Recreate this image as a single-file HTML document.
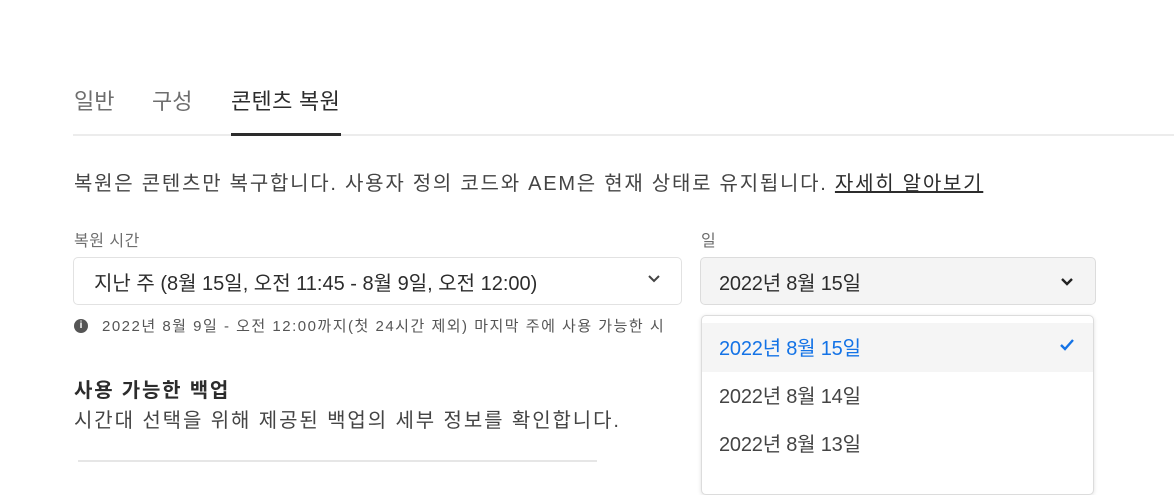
<!DOCTYPE html>
<html><head><meta charset="utf-8"><style>
*{margin:0;padding:0;box-sizing:border-box}
body{width:1174px;height:462px;overflow:hidden;background:#fff;font-family:"Liberation Sans","Noto Sans CJK KR",sans-serif;color:#2c2c2c;position:relative}
.a{position:absolute;white-space:nowrap}
</style></head><body>
<div class="a" style="left:74px;top:84px;font-size:22px;color:#6e6e6e">일반</div>
<div class="a" style="left:152px;top:84px;font-size:22px;color:#6e6e6e">구성</div>
<div class="a" style="left:231px;top:84px;font-size:22px;color:#2c2c2c;letter-spacing:0.3px">콘텐츠 복원</div>
<div class="a" style="left:73px;top:134px;width:1101px;height:2px;background:#ececec"></div>
<div class="a" style="left:231px;top:133px;width:110px;height:3px;background:#2c2c2c"></div>
<div class="a" style="left:74px;top:167px;font-size:20px;color:#444;letter-spacing:1.75px">복원은 콘텐츠만 복구합니다. 사용자 정의 코드와 AEM은 현재 상태로 유지됩니다. <span style="text-decoration:underline;color:#2c2c2c">자세히 알아보기</span></div>
<div class="a" style="left:74px;top:227px;font-size:16px;color:#6e6e6e;letter-spacing:0.5px">복원 시간</div>
<div class="a" style="left:73px;top:257px;width:609px;height:48px;border:1px solid #e2e2e2;border-radius:5px;background:#fff"></div>
<div class="a" style="left:94px;top:267px;font-size:20px;color:#2c2c2c;letter-spacing:0px">지난 주 (8월 15일, 오전 11:45 - 8월 9일, 오전 12:00)</div>
<svg class="a" style="left:647px;top:274px" width="14" height="10"><path d="M2 2 L7 7 L12 2" stroke="#444" stroke-width="2" fill="none"/></svg>
<div class="a" style="left:74px;top:319px;width:14px;height:14px;border-radius:50%;background:#555;color:#fff;font-size:10px;font-weight:bold;text-align:center;line-height:14px">i</div>
<div class="a" style="left:102px;top:315px;font-size:15px;color:#555;letter-spacing:1.5px">2022년 8월 9일 - 오전 12:00까지(첫 24시간 제외) 마지막 주에 사용 가능한 시</div>
<div class="a" style="left:74px;top:374px;font-size:20px;font-weight:bold;color:#2c2c2c;letter-spacing:1.8px">사용 가능한 백업</div>
<div class="a" style="left:74px;top:404px;font-size:20px;color:#444;letter-spacing:1.9px">시간대 선택을 위해 제공된 백업의 세부 정보를 확인합니다.</div>
<div class="a" style="left:78px;top:460px;width:519px;height:2px;background:#e6e6e6"></div>
<div class="a" style="left:701px;top:227px;font-size:16px;color:#6e6e6e">일</div>
<div class="a" style="left:700px;top:257px;width:396px;height:48px;border:1px solid #dcdcdc;border-radius:5px;background:#f4f4f4"></div>
<div class="a" style="left:719px;top:267px;font-size:20px;color:#2c2c2c;letter-spacing:-0.2px">2022년 8월 15일</div>
<svg class="a" style="left:1060px;top:277px" width="14" height="10"><path d="M2 2 L7 7 L12 2" stroke="#222" stroke-width="2.4" fill="none"/></svg>
<div class="a" style="left:701px;top:315px;width:393px;height:180px;border:1px solid #dcdcdc;border-radius:5px;background:#fff;box-shadow:0 1px 4px rgba(0,0,0,.12);overflow:hidden">
<div style="position:absolute;left:0;top:7px;width:100%;height:49px;background:#f5f5f5"></div>
</div>
<div class="a" style="left:719px;top:332px;font-size:20px;color:#1473e6;letter-spacing:-0.2px">2022년 8월 15일</div>
<svg class="a" style="left:1059px;top:338px" width="16" height="14"><path d="M2 7 L6 11 L14 2" stroke="#1473e6" stroke-width="2.4" fill="none"/></svg>
<div class="a" style="left:719px;top:380px;font-size:20px;color:#444;letter-spacing:-0.2px">2022년 8월 14일</div>
<div class="a" style="left:719px;top:428px;font-size:20px;color:#444;letter-spacing:-0.2px">2022년 8월 13일</div>
</body></html>
